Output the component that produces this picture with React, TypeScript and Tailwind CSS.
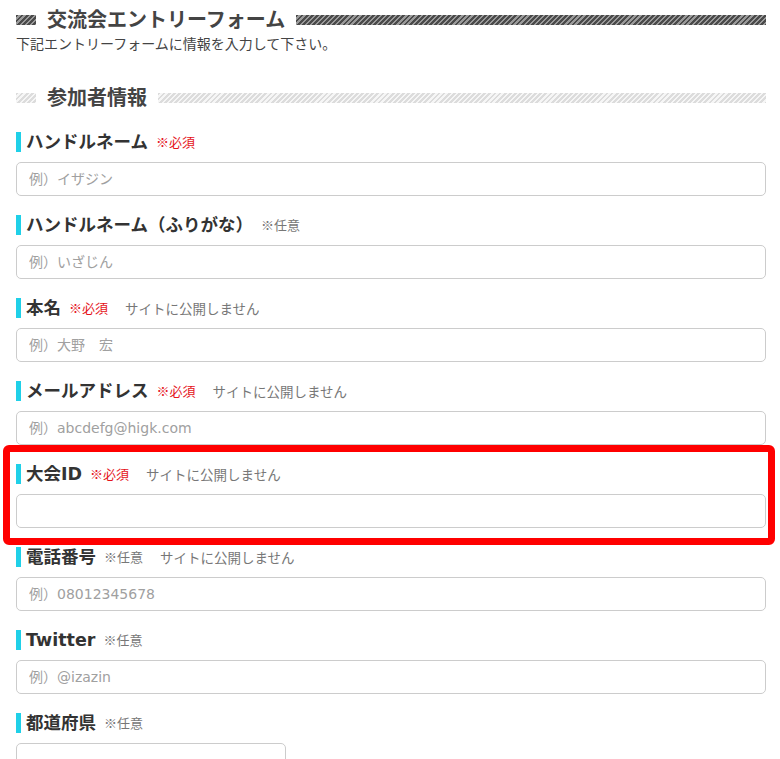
import { ReactNode } from "react"

const font = { fontFamily: '"DejaVu Sans", "Noto Sans CJK JP", sans-serif' }
const jp = { fontFamily: '"Noto Sans CJK JP", sans-serif' }

type FieldProps = {
  label: string
  required?: boolean
  note?: boolean
  placeholder?: string
  select?: boolean
}

function Field({ label, required, note, placeholder, select }: FieldProps) {
  return (
    <div className="flex flex-col gap-2">
      <div className="flex items-center h-6">
        <span className="w-[5px] h-5 bg-[#1fd0e8] mr-[5px]" />
        <span className="text-[17.5px] font-bold text-[#333]">{label}</span>
        {required ? (
          <span className="ml-2 text-[13px] text-[#e5131b]" style={jp}>※必須</span>
        ) : (
          <span className="ml-2 text-[13px] text-[#777]" style={jp}>※任意</span>
        )}
        {note && (
          <span className="ml-[17px] text-[13.5px] text-[#777]" style={jp}>
            サイトに公開しません
          </span>
        )}
      </div>
      {select ? (
        <select className="appearance-none w-[270px] h-[34px] border border-[#ccc] rounded-[5px] bg-white" />
      ) : (
        <input
          className="w-full h-[34px] border border-[#ccc] rounded-[5px] px-3 text-[14px] text-[#333] placeholder:text-[#a0a0a0] outline-none"
          placeholder={placeholder}
        />
      )}
    </div>
  )
}

function Heading({ children, dark }: { children: ReactNode; dark?: boolean }) {
  const stripe = dark
    ? "bg-[repeating-linear-gradient(135deg,#4a4a4a_0_2px,#9a9a9a_2px_3.6px)]"
    : "bg-[repeating-linear-gradient(135deg,#dcdcdc_0_2px,#f6f6f6_2px_3.6px)]"
  return (
    <div className="flex items-center gap-[11px] h-6">
      <span className={`w-[20px] h-[10px] ${stripe}`} />
      <h2 className="text-[20px] font-bold text-[#444] leading-6">{children}</h2>
      <span className={`flex-1 h-[10px] ${stripe}`} />
    </div>
  )
}

export default function App() {
  return (
    <div className="bg-white min-h-screen pl-4 pr-[14px] pt-2" style={font}>
      <Heading dark>交流会エントリーフォーム</Heading>
      <p className="mt-[2px] text-[14px] leading-5 text-[#444]">下記エントリーフォームに情報を入力して下さい。</p>

      <div className="mt-8">
        <Heading>参加者情報</Heading>
      </div>

      <div className="mt-5 flex flex-col gap-[17px]">
        <Field label="ハンドルネーム" required placeholder="例）イザジン" />
        <Field label="ハンドルネーム（ふりがな）" placeholder="例）いざじん" />
        <Field label="本名" required note placeholder="例）大野　宏" />
        <Field label="メールアドレス" required note placeholder="例）abcdefg@higk.com" />
        <div className="relative">
          <Field label="大会ID" required note />
          <div className="absolute -top-[17px] -bottom-[17px] -left-[13px] -right-[9px] border-[7px] border-[#ff0000] rounded-[6px] pointer-events-none" />
        </div>
        <Field label="電話番号" note placeholder="例）08012345678" />
        <Field label="Twitter" placeholder="例）@izazin" />
        <Field label="都道府県" select />
      </div>
    </div>
  )
}
